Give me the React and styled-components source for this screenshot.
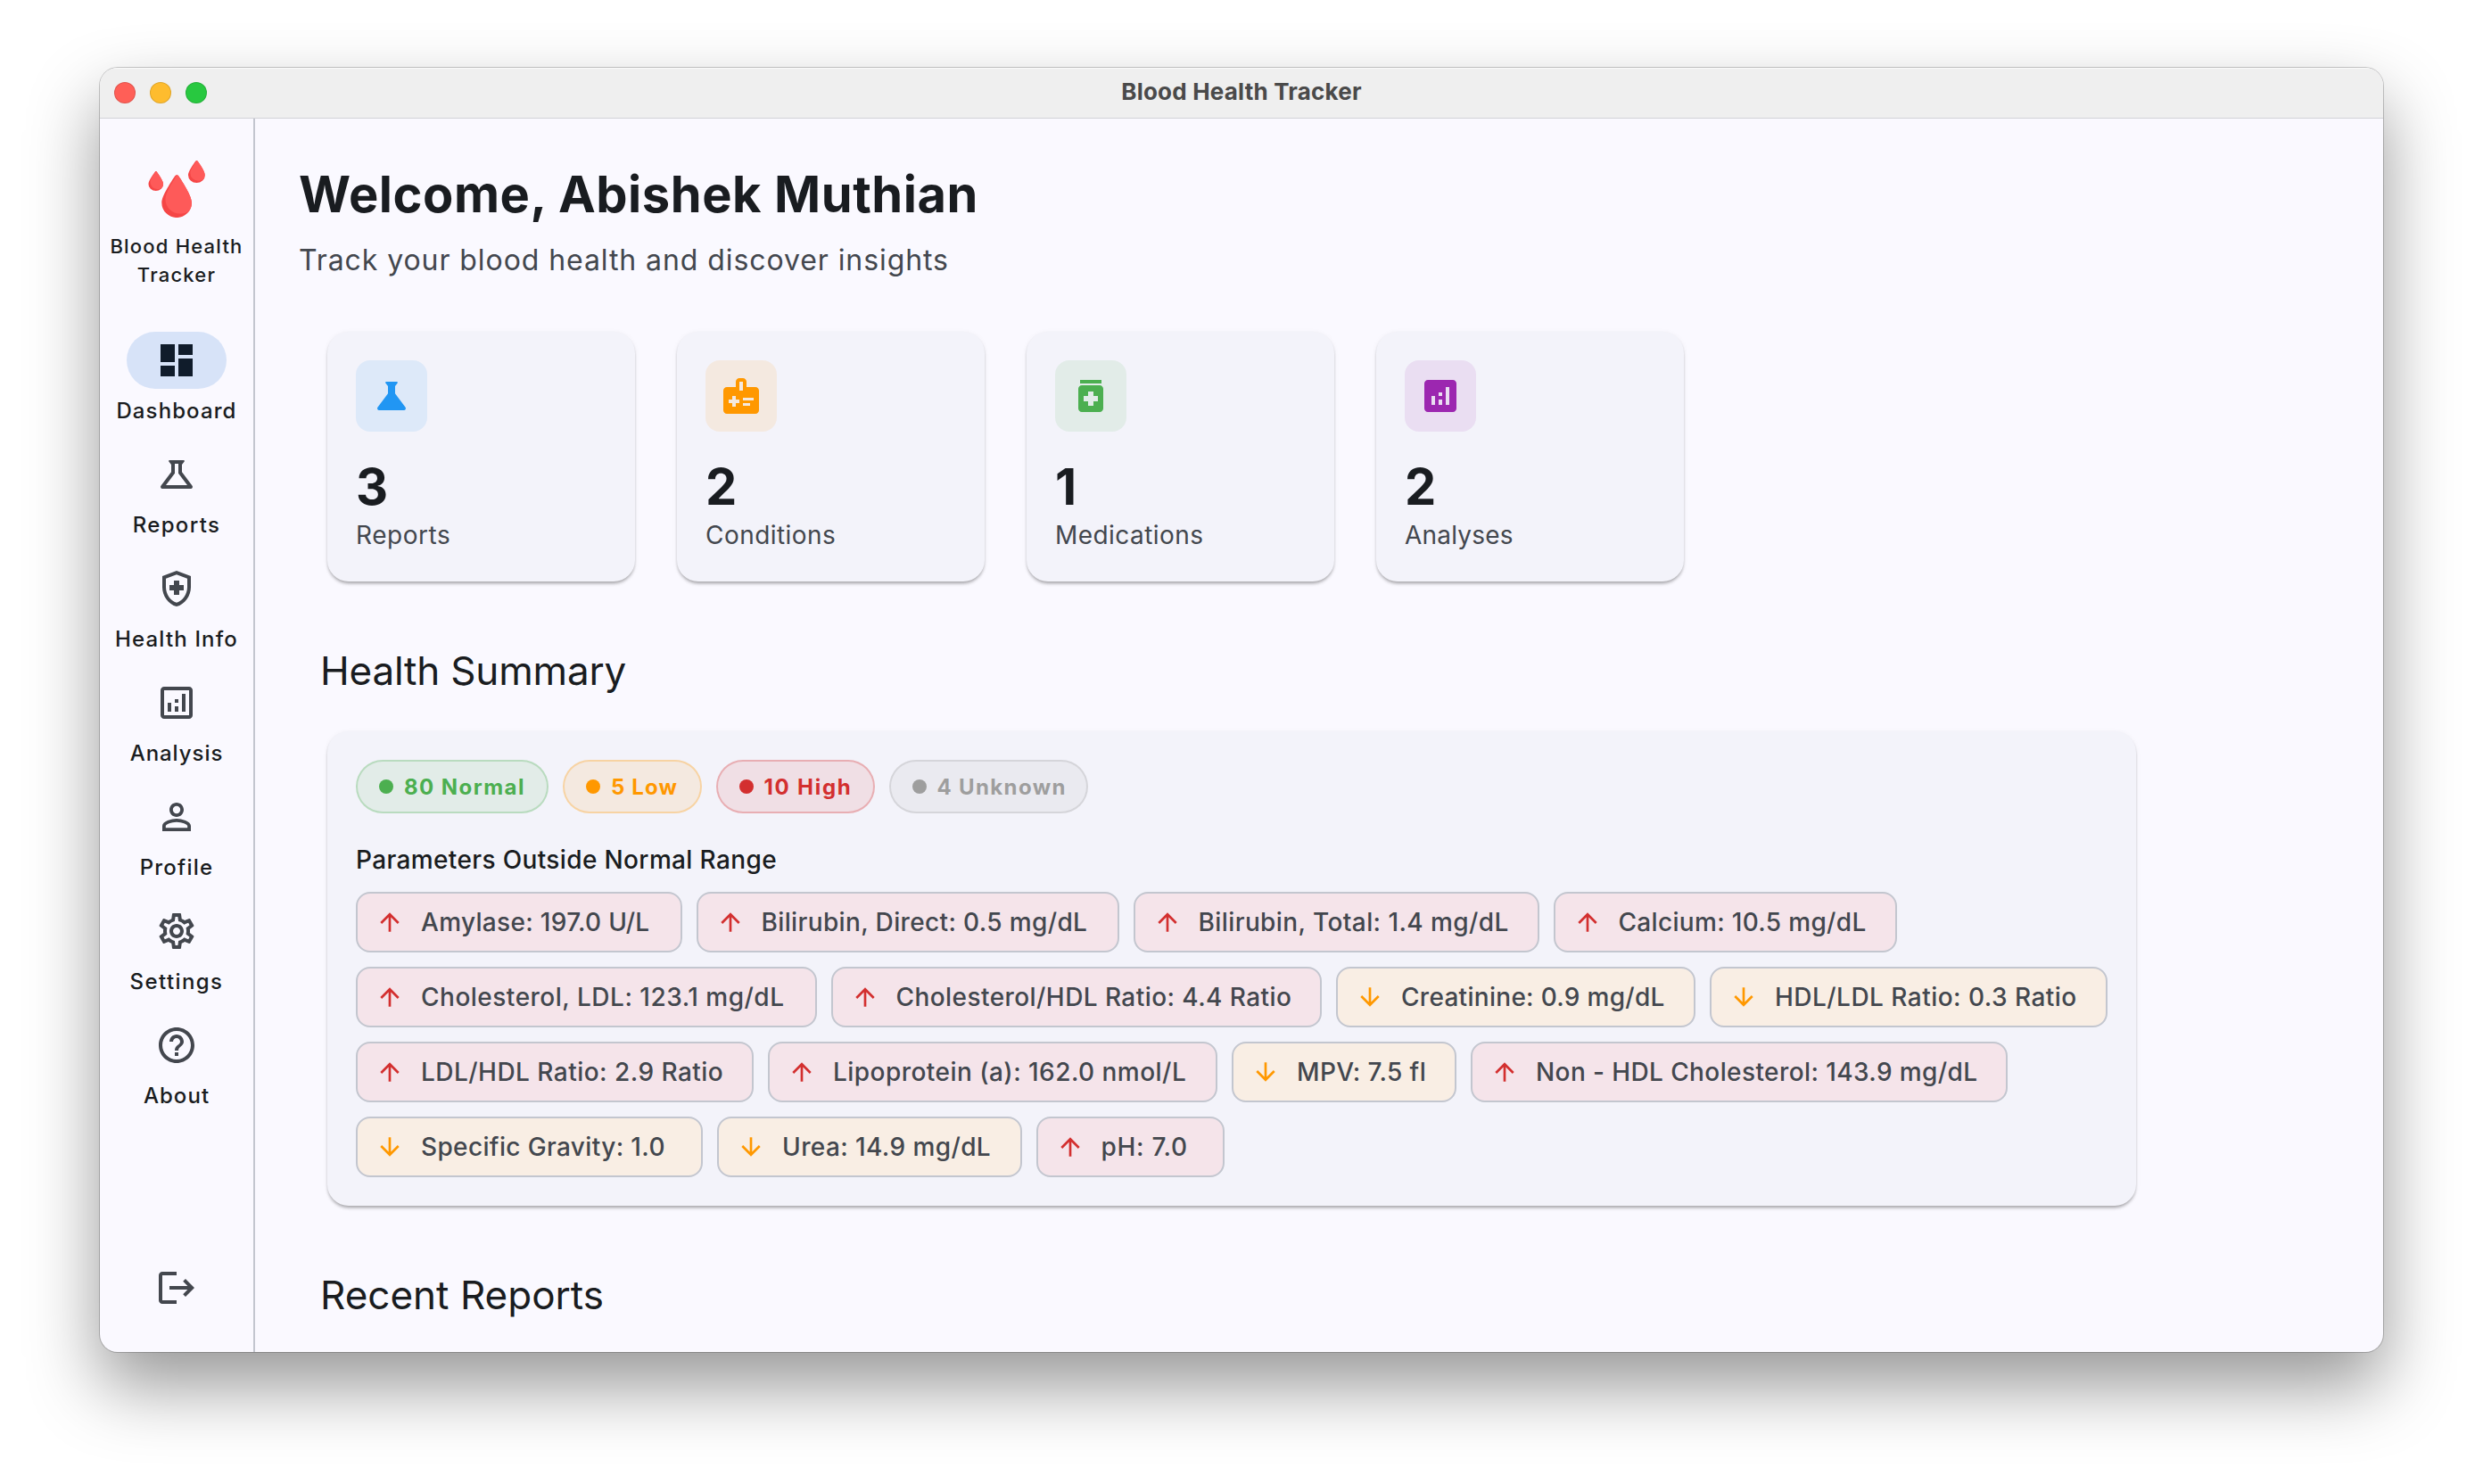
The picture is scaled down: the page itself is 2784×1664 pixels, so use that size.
import React from "react";
import styled, { createGlobalStyle } from "styled-components";
import {
  MdAnalytics,
  MdArrowDownward,
  MdArrowUpward,
  MdDashboard,
  MdHelpOutline,
  MdLogout,
  MdMedicalInformation,
  MdMedication,
  MdOutlineAnalytics,
  MdOutlineHealthAndSafety,
  MdOutlineScience,
  MdOutlineSettings,
  MdPersonOutline,
  MdScience
} from "react-icons/md";

const GlobalStyle = createGlobalStyle`
  *, *::before, *::after {
    box-sizing: border-box;
  }

  body {
    margin: 0;
    background: #fff;
    font-family: Inter, "Liberation Sans", sans-serif;
    color: #191c20;
  }

  svg {
    display: block;
    flex: none;
  }
`;

const Desktop = styled.div`
  width: 2784px;
  height: 1664px;
  padding: 76px 112px 148px;
  overflow: hidden;
`;

const Window = styled.div`
  display: flex;
  flex-direction: column;
  height: 1440px;
  border-radius: 20px;
  overflow: hidden;
  background: #faf9ff;
  box-shadow: 0 0 0 1px rgba(0, 0, 0, 0.2), 0 38px 80px rgba(0, 0, 0, 0.41);
`;

const TitleBar = styled.header`
  display: grid;
  grid-template-columns: 1fr auto 1fr;
  align-items: center;
  flex: none;
  height: 57px;
  padding: 0 16px;
  background: #efefef;
  border-bottom: 1px solid #d2d2d7;
  box-shadow: inset 0 2px 1px -1px #fbfbfb;
`;

const Lights = styled.div`
  display: flex;
  gap: 16px;
`;

const Light = styled.span`
  width: 24px;
  height: 24px;
  border-radius: 50%;
  border: 1px solid rgba(0, 0, 0, 0.12);
  background: ${p => p.$color};
`;

const WindowTitle = styled.div`
  padding-bottom: 3px;
  font-size: 26px;
  font-weight: 700;
  line-height: 32px;
  letter-spacing: 0.2px;
  color: #4a4a4a;
`;

const Body = styled.div`
  display: flex;
  flex: 1;
  min-height: 0;
`;

const Sidebar = styled.nav`
  display: flex;
  flex-direction: column;
  align-items: center;
  flex: none;
  width: 174px;
  padding: 47px 0 48px;
  border-right: 2px solid #c3c6cf;
`;

const AppName = styled.div`
  margin: 16px 0 48px;
  font-size: 22px;
  font-weight: 500;
  line-height: 32px;
  letter-spacing: 1.2px;
  text-align: center;
`;

const NavList = styled.div`
  display: flex;
  flex-direction: column;
  gap: 23px;
`;

const NavItem = styled.div`
  display: flex;
  flex-direction: column;
  align-items: center;
  gap: 9px;
  font-size: 24px;
  font-weight: 500;
  line-height: 32px;
  letter-spacing: ${p => p.$track}px;
  white-space: nowrap;
`;

const NavPill = styled.div`
  display: flex;
  align-items: center;
  justify-content: center;
  width: 112px;
  height: 64px;
  border-radius: 32px;
  background: ${p => (p.$active ? "#d7e3f8" : "transparent")};
  color: ${p => (p.$active ? "#101c2b" : "#43474e")};
`;

const Logout = styled.div`
  margin-top: auto;
  color: #43474e;
`;

const Main = styled.main`
  flex: 1;
  padding: 49px 0 0 49px;
`;

const Welcome = styled.h1`
  margin: 0;
  font-size: 56px;
  font-weight: 700;
  line-height: 72px;
  letter-spacing: 0.56px;
`;

const Tagline = styled.p`
  margin: 14px 0 0;
  font-size: 32px;
  line-height: 48px;
  letter-spacing: 0.92px;
  color: #43474e;
`;

const StatRow = styled.div`
  display: flex;
  gap: 47px;
  margin: 56px 0 0 32px;
`;

const Card = styled.div`
  padding: 32px;
  border-radius: 24px;
  background: #f3f3fa;
  box-shadow: 0 4px 4px -2px rgba(0, 0, 0, 0.24), 0 2px 3px rgba(0, 0, 0, 0.12),
    0 1px 6px rgba(0, 0, 0, 0.05);
`;

const StatCard = styled(Card)`
  width: 345px;
  height: 280px;
`;

const StatIcon = styled.div`
  display: flex;
  align-items: center;
  justify-content: center;
  width: 80px;
  height: 80px;
  border-radius: 16px;
  background: ${p => p.$color}1a;
  color: ${p => p.$color};
`;

const StatValue = styled.div`
  margin-top: 28px;
  font-size: 56px;
  font-weight: 700;
  line-height: 68px;
`;

const StatLabel = styled.div`
  font-size: 28px;
  line-height: 40px;
  letter-spacing: ${p => p.$track}px;
  color: #43474e;
`;

const SectionTitle = styled.h2`
  margin: 72px 0 0 24px;
  font-size: 44px;
  font-weight: 400;
  line-height: 56px;
  letter-spacing: ${p => p.$track}px;
`;

const SummaryCard = styled(Card)`
  width: 2028px;
  height: 532px;
  margin: 40px 0 0 32px;
`;

const StatusRow = styled.div`
  display: flex;
  gap: 16px;
`;

const StatusPill = styled.div`
  display: flex;
  align-items: center;
  gap: 12px;
  width: ${p => p.$width}px;
  height: 60px;
  padding-left: 24px;
  border: 2px solid ${p => p.$color}59;
  border-radius: 30px;
  background: ${p => p.$color}1a;
  background-clip: padding-box;
  font-size: 24px;
  font-weight: 700;
  letter-spacing: ${p => p.$track}px;
  color: ${p => p.$color};
  white-space: nowrap;

  &::before {
    content: "";
    flex: none;
    width: 16px;
    height: 16px;
    border-radius: 50%;
    background: currentColor;
  }
`;

const Subheading = styled.h3`
  margin: 32px 0 16px;
  font-size: 28px;
  font-weight: 500;
  line-height: 40px;
  letter-spacing: 0.36px;
`;

const ChipRows = styled.div`
  display: flex;
  flex-wrap: wrap;
  gap: 16px;
`;

const Chip = styled.div`
  display: flex;
  align-items: center;
  gap: 19px;
  width: ${p => p.$width}px;
  height: 68px;
  padding-left: 20px;
  border: 2px solid #c3c6cf;
  border-radius: 16px;
  background: ${p => (p.$low ? "#f9eee4" : "#f5e4ea")};
  font-size: 28px;
  font-weight: 500;
  letter-spacing: ${p => p.$track}px;
  color: #43474e;
  white-space: nowrap;

  svg {
    color: ${p => (p.$low ? "#ff9800" : "#d32f2f")};
  }
`;

const navItems = [
  { label: "Dashboard", icon: MdDashboard, track: 1.1, active: true },
  { label: "Reports", icon: MdOutlineScience, track: 1.35 },
  { label: "Health Info", icon: MdOutlineHealthAndSafety, track: 1.15 },
  { label: "Analysis", icon: MdOutlineAnalytics, track: 0.95 },
  { label: "Profile", icon: MdPersonOutline, track: 1.2 },
  { label: "Settings", icon: MdOutlineSettings, track: 1.4 },
  { label: "About", icon: MdHelpOutline, track: 1.05 }
];

const stats = [
  { label: "Reports", value: 3, icon: MdScience, color: "#2196f3", track: 0.55 },
  { label: "Conditions", value: 2, icon: MdMedicalInformation, color: "#ff9800", track: 0.45 },
  { label: "Medications", value: 1, icon: MdMedication, color: "#4caf50", track: 0.45 },
  { label: "Analyses", value: 2, icon: MdAnalytics, color: "#9c27b0", track: 0.2 }
];

const statuses = [
  { label: "80 Normal", color: "#4caf50", width: 216, track: 1.45 },
  { label: "5 Low", color: "#ff9800", width: 155.5, track: 1.1 },
  { label: "10 High", color: "#d32f2f", width: 178, track: 1.75 },
  { label: "4 Unknown", color: "#9e9e9e", width: 223.5, track: 1.35 }
];

const parameters = [
  { text: "Amylase: 197.0 U/L", width: 365.5, track: 0.32 },
  { text: "Bilirubin, Direct: 0.5 mg/dL", width: 474, track: 0.36 },
  { text: "Bilirubin, Total: 1.4 mg/dL", width: 455, track: 0.4 },
  { text: "Calcium: 10.5 mg/dL", width: 385.5, track: 0.32 },
  { text: "Cholesterol, LDL: 123.1 mg/dL", width: 516.5, track: 0.5 },
  { text: "Cholesterol/HDL Ratio: 4.4 Ratio", width: 550.5, track: 0.43 },
  { text: "Creatinine: 0.9 mg/dL", width: 403, track: 0.29, low: true },
  { text: "HDL/LDL Ratio: 0.3 Ratio", width: 445.5, track: 0.47, low: true },
  { text: "LDL/HDL Ratio: 2.9 Ratio", width: 446, track: 0.47 },
  { text: "Lipoprotein (a): 162.0 nmol/L", width: 504, track: 0.46 },
  { text: "MPV: 7.5 fl", width: 252, track: 0.4, low: true },
  { text: "Non - HDL Cholesterol: 143.9 mg/dL", width: 602, track: 0.4 },
  { text: "Specific Gravity: 1.0", width: 389, track: 0.36, low: true },
  { text: "Urea: 14.9 mg/dL", width: 341.5, track: 0.4, low: true },
  { text: "pH: 7.0", width: 211, track: 0.7 }
];

const Drop = ({ transform }) => (
  <g transform={transform} clipPath="url(#drop)">
    <rect x="14" y="14" width="36" height="52" fill="#f54646" />
    <path
      d="M33 15C27 25 19.5 36 19.5 43.500A16 16 0 0 0 36 59.500C41 59.500 45 58.500 48 54L60 50V10Z"
      fill="#fe5a59"
    />
  </g>
);

const Logo = () => (
  <svg width="64" height="64" viewBox="0 0 64 64">
    <clipPath id="drop">
      <path d="M30 17.500Q32.200 14.500 34.400 17.500C38 23 49 39.500 49 47.200A16.800 16.800 0 0 1 15.300 47.200C15.300 39.500 26.500 23 30 17.500Z" />
    </clipPath>
    <Drop />
    <Drop transform="translate(36.400 -8.300) scale(0.560 0.520)" />
    <Drop transform="translate(-7.300 4.600) scale(0.500 0.460)" />
  </svg>
);

const App = () => {
  return (
    <Desktop>
      <GlobalStyle />
      <Window>
        <TitleBar>
          <Lights>
            <Light $color="#ff5f57" />
            <Light $color="#febc2e" />
            <Light $color="#28c840" />
          </Lights>
          <WindowTitle>Blood Health Tracker</WindowTitle>
        </TitleBar>
        <Body>
          <Sidebar>
            <Logo />
            <AppName>
              Blood Health
              <br />
              Tracker
            </AppName>
            <NavList>
              {navItems.map(({ label, icon: Icon, track, active }) => (
                <NavItem key={label} $track={track}>
                  <NavPill $active={active}>
                    <Icon size={48} />
                  </NavPill>
                  {label}
                </NavItem>
              ))}
            </NavList>
            <Logout>
              <MdLogout size={48} />
            </Logout>
          </Sidebar>
          <Main>
            <Welcome>Welcome, Abishek Muthian</Welcome>
            <Tagline>Track your blood health and discover insights</Tagline>
            <StatRow>
              {stats.map(({ label, value, icon: Icon, color, track }) => (
                <StatCard key={label}>
                  <StatIcon $color={color}>
                    <Icon size={48} />
                  </StatIcon>
                  <StatValue>{value}</StatValue>
                  <StatLabel $track={track}>{label}</StatLabel>
                </StatCard>
              ))}
            </StatRow>
            <SectionTitle $track={-0.18}>Health Summary</SectionTitle>
            <SummaryCard>
              <StatusRow>
                {statuses.map(({ label, color, width, track }) => (
                  <StatusPill key={label} $color={color} $width={width} $track={track}>
                    {label}
                  </StatusPill>
                ))}
              </StatusRow>
              <Subheading>Parameters Outside Normal Range</Subheading>
              <ChipRows>
                {parameters.map(({ text, width, track, low }) => (
                  <Chip key={text} $width={width} $track={track} $low={low}>
                    {low ? <MdArrowDownward size={32} /> : <MdArrowUpward size={32} />}
                    {text}
                  </Chip>
                ))}
              </ChipRows>
            </SummaryCard>
            <SectionTitle $track={0}>Recent Reports</SectionTitle>
          </Main>
        </Body>
      </Window>
    </Desktop>
  );
};

export default App;
